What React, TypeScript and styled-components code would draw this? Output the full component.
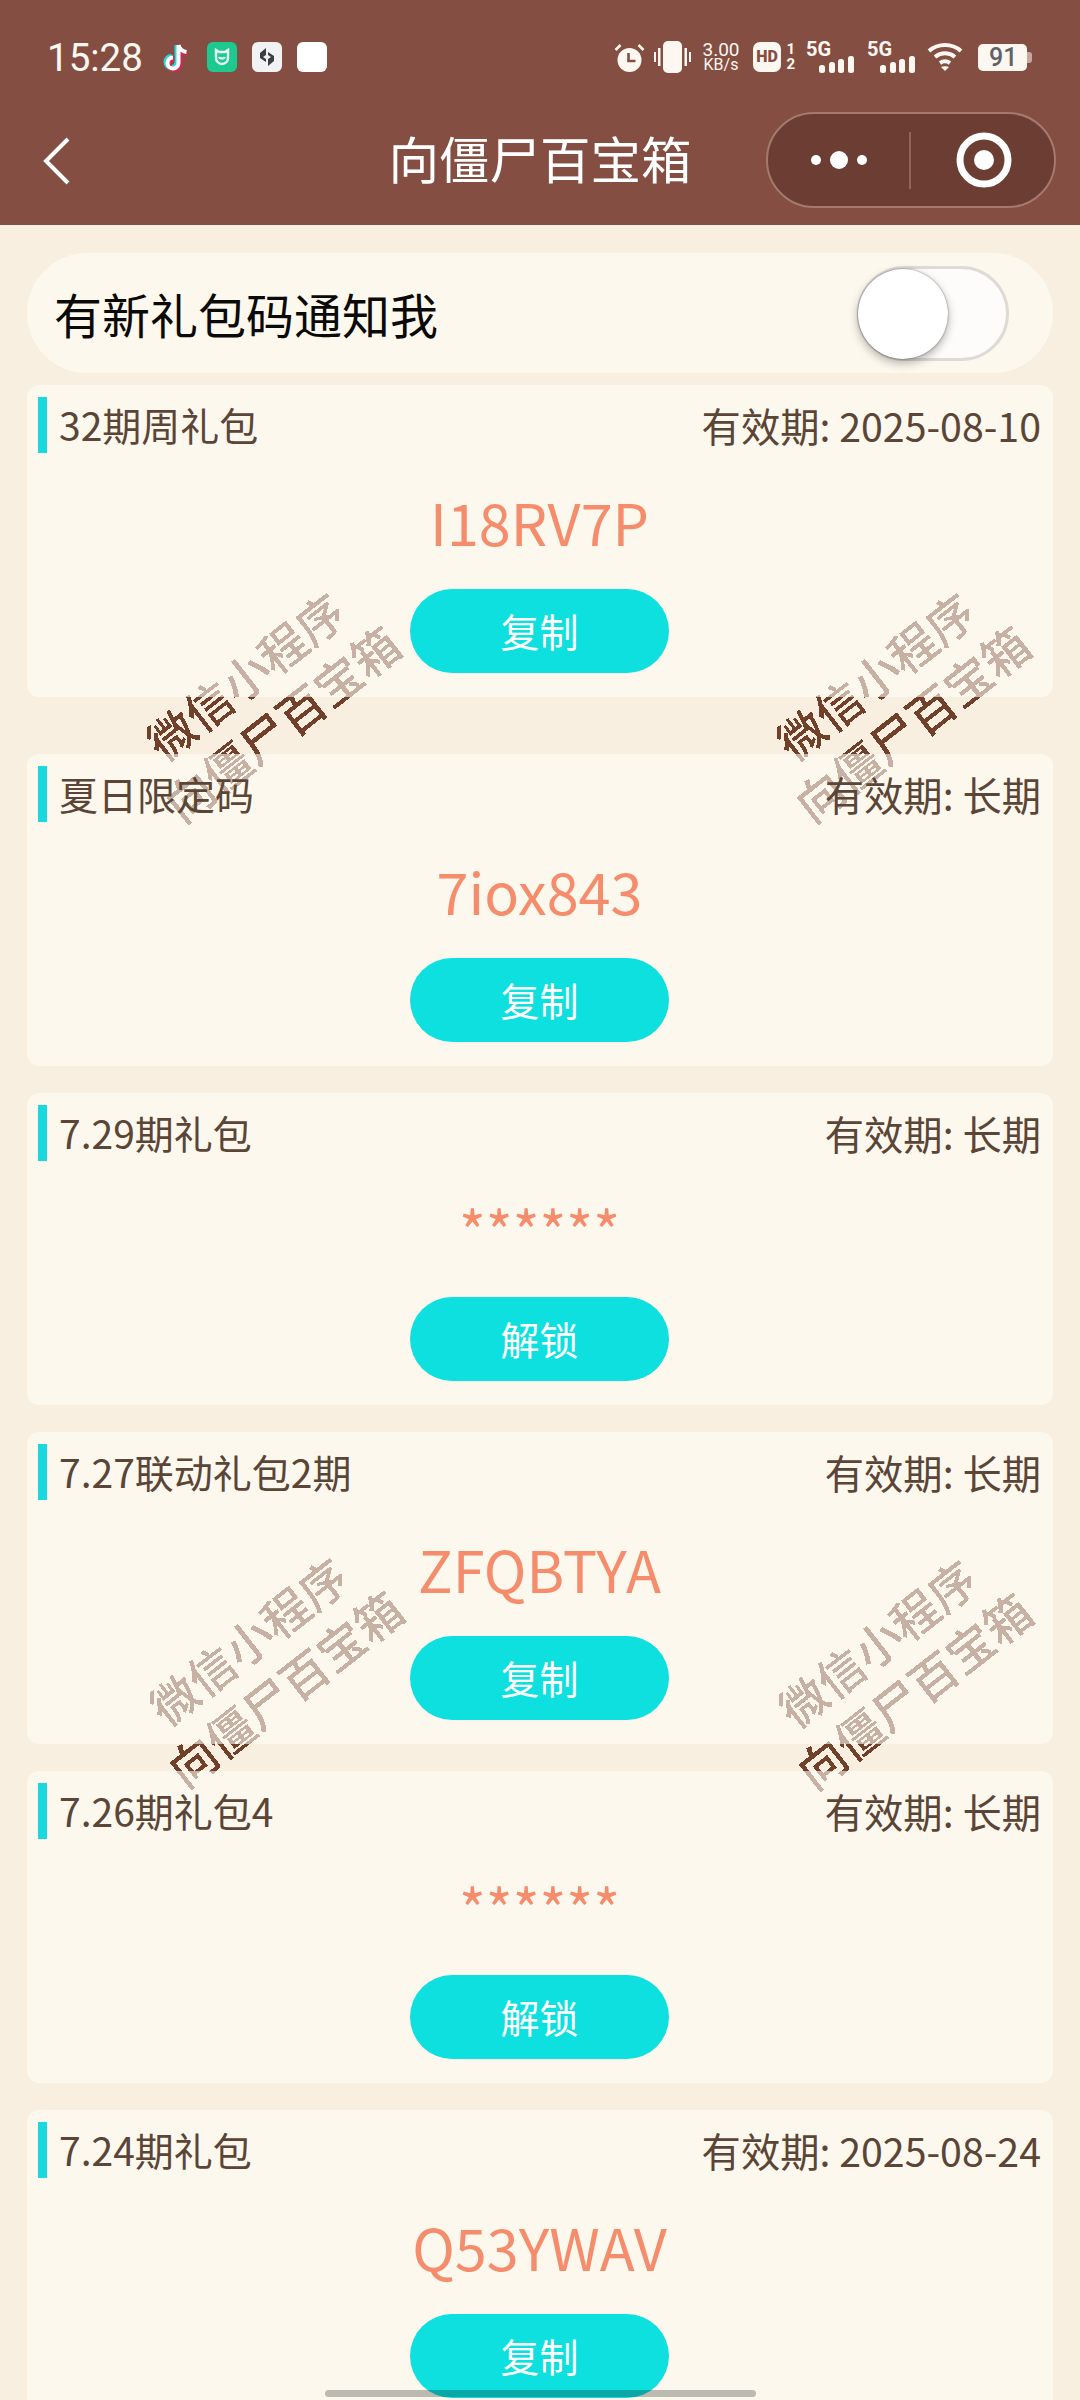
import styled, { createGlobalStyle } from 'styled-components';

const GlobalStyle = createGlobalStyle`
  html, body {
    margin: 0;
    padding: 0;
    background: #f8efe0;
  }
  body {
    font-family: "Noto Sans CJK SC", "Noto Sans", sans-serif;
  }
`;

const Page = styled.div`
  position: relative;
  width: 1080px;
  height: 2400px;
  overflow: hidden;
  background: #f8efe0;
`;

const Header = styled.header`
  position: relative;
  z-index: 1;
  height: 225px;
  background: #844f42;
  color: #fff;
`;

const StatusBar = styled.div`
  height: 113px;
  padding: 1px 48px 0 47px;
  display: flex;
  align-items: center;
  box-sizing: border-box;
`;

const Clock = styled.span`
  font-family: Roboto, sans-serif;
  font-size: 38.5px;
  width: 116px;
  color: #fdf7f2;
`;

const AppIcons = styled.div`
  display: flex;
  align-items: center;
  gap: 15px;
  flex: 1;
`;

const AppTile = styled.div<{ $bg: string }>`
  width: 30px;
  height: 30px;
  border-radius: 6px;
  background: ${(p) => p.$bg};
  display: flex;
  align-items: center;
  justify-content: center;
`;

const SystemIcons = styled.div`
  display: flex;
  align-items: center;
  height: 34px;
  color: #fdf7f2;
  font-family: Roboto, sans-serif;
`;

const Glyph = styled.svg<{ $ml?: number }>`
  display: block;
  flex: none;
  margin-left: ${(p) => p.$ml ?? 0}px;
`;

const Speed = styled.div`
  width: 38px;
  margin: 0 13px 0 11px;
  text-align: center;
  white-space: nowrap;
  span {
    display: block;
    line-height: 15px;
  }
  span:first-child {
    font-size: 19px;
  }
  span:last-child {
    font-size: 16px;
  }
`;

const HdBadge = styled.div`
  flex: none;
  width: 28px;
  height: 30px;
  border-radius: 7px;
  background: #fdf7f2;
  color: #844f42;
  font-size: 16px;
  font-weight: 900;
  line-height: 30px;
  text-align: center;
`;

const SimSlots = styled.div`
  width: 14px;
  font-size: 15px;
  font-weight: 700;
  text-align: right;
  span {
    display: block;
    line-height: 15px;
  }
`;

const SignalBox = styled.div<{ $ml: number }>`
  position: relative;
  flex: none;
  width: 48px;
  height: 34px;
  margin-left: ${(p) => p.$ml}px;
`;

const SignalLabel = styled.span`
  position: absolute;
  left: 0;
  top: 0;
  font-size: 20px;
  font-weight: 700;
  line-height: 18px;
`;

const Battery = styled.div`
  position: relative;
  flex: none;
  width: 49px;
  height: 27px;
  margin: 0 5px 0 15px;
  border-radius: 5px;
  background: #fdf7f2;
  color: #5e6368;
  font-size: 25px;
  font-weight: 500;
  line-height: 27px;
  padding-left: 11px;
  box-sizing: border-box;
  &::after {
    content: '';
    position: absolute;
    right: -5px;
    top: 8px;
    width: 5px;
    height: 11px;
    border-radius: 0 3px 3px 0;
    background: #c9a79e;
  }
`;

const NavBar = styled.nav`
  position: relative;
  height: 112px;
  display: flex;
  align-items: center;
  justify-content: center;
`;

const BackButton = styled.div`
  position: absolute;
  left: 43px;
  top: 24px;
  display: flex;
`;

const NavTitle = styled.h1`
  margin: 0 0 23px;
  font-size: 50.5px;
  font-weight: 400;
  line-height: 1;
  color: #fff;
`;

const Capsule = styled.div`
  position: absolute;
  left: 766px;
  top: -1px;
  width: 290px;
  height: 96px;
  box-sizing: border-box;
  border: 2px solid #a47a6e;
  border-radius: 48px;
  background: #6c3e33;
  display: flex;
  align-items: center;
`;

const CapsuleSide = styled.div<{ $shift: number }>`
  flex: 1;
  display: flex;
  align-items: center;
  justify-content: center;
  padding-left: ${(p) => p.$shift}px;
`;

const CapsuleLine = styled.div`
  width: 2px;
  height: 57px;
  background: #8f6659;
`;

const WatermarkLayer = styled.div`
  position: absolute;
  inset: 0;
  z-index: 0;
  filter: url(#wm-jag);
`;

const Watermark = styled.div<{ $x: number; $y: number }>`
  position: absolute;
  left: ${(p) => p.$x}px;
  top: ${(p) => p.$y}px;
  width: 330px;
  transform: rotate(-38deg);
  transform-origin: center;
  color: #70402c;
  font-size: 47px;
  font-weight: 500;
  line-height: 60px;
  text-align: center;
  white-space: nowrap;
  span {
    display: block;
  }
`;

const FilterDefs = styled.svg`
  position: absolute;
  width: 0;
  height: 0;
`;

const Content = styled.main`
  position: relative;
  z-index: 1;
  padding: 28px 27px 0;
`;

const NotifyRow = styled.section`
  height: 120px;
  border-radius: 60px;
  background: rgba(255, 253, 246, 0.6);
  display: flex;
  align-items: center;
  justify-content: space-between;
  padding: 0 44px 0 27px;
`;

const NotifyLabel = styled.span`
  font-size: 48px;
  color: #0b0a08;
`;

const Toggle = styled.div`
  position: relative;
  width: 152px;
  height: 95px;
  box-sizing: border-box;
  border: 3px solid #dedbd6;
  border-radius: 48px;
  background: #fdfcfa;
`;

const ToggleKnob = styled.div`
  position: absolute;
  left: -2px;
  top: 0;
  width: 90px;
  height: 90px;
  border-radius: 50%;
  background: #fff;
  box-shadow: 0 0 2px rgba(0, 0, 0, 0.5), 0 4px 10px rgba(0, 0, 0, 0.3);
`;

const Card = styled.section<{ $gap: number }>`
  height: 312px;
  margin-top: ${(p) => p.$gap}px;
  border-radius: 12px;
  background: rgba(255, 253, 246, 0.6);
  box-sizing: border-box;
  padding: 12px 12px 0 11px;
  display: flex;
  flex-direction: column;
  align-items: center;
`;

const CardHead = styled.div`
  width: 100%;
  height: 56px;
  display: flex;
  align-items: center;
  justify-content: space-between;
  color: #5b4536;
  font-size: 39px;
`;

const CardTitle = styled.span`
  border-left: 9px solid #19d8de;
  height: 56px;
  line-height: 54px;
  padding-left: 12px;
`;

const Expiry = styled.span`
  font-size: 39.3px;
  line-height: 54px;
`;

const Code = styled.div`
  height: 92px;
  margin-top: 24px;
  color: #f58c6c;
  font-size: 57.5px;
  line-height: 88px;
  text-align: center;
`;

const ActionButton = styled.button`
  width: 259px;
  height: 84px;
  margin-top: 20px;
  padding: 0 0 3px;
  border: none;
  border-radius: 42px;
  background: #0de0df;
  color: #fff;
  font-family: inherit;
  font-size: 39px;
`;

const HomeBar = styled.div`
  position: absolute;
  z-index: 2;
  left: 325px;
  bottom: 3px;
  width: 431px;
  height: 7px;
  border-radius: 4px;
  background: rgba(0, 0, 0, 0.25);
`;

const gifts = [
  { title: '32期周礼包', expiry: '2025-08-10', code: 'I18RV7P', gap: 12 },
  { title: '夏日限定码', expiry: '长期', code: '7iox843', gap: 57 },
  { title: '7.29期礼包', expiry: '长期', code: '******', gap: 27 },
  { title: '7.27联动礼包2期', expiry: '长期', code: 'ZFQBTYA', gap: 27 },
  { title: '7.26期礼包4', expiry: '长期', code: '******', gap: 27 },
  { title: '7.24期礼包', expiry: '2025-08-24', code: 'Q53YWAV', gap: 27 },
];

const marks = [
  { x: 98, y: 639 },
  { x: 728, y: 639 },
  { x: 101, y: 1604 },
  { x: 730, y: 1606 },
];

function Signal({ ml }: { ml: number }) {
  return (
    <SignalBox $ml={ml}>
      <SignalLabel>5G</SignalLabel>
      <svg width="48" height="34" viewBox="0 0 48 34" fill="#fdf7f2">
        <rect x="13" y="25" width="6" height="8" rx="2.500" />
        <rect x="23" y="22" width="6" height="11" rx="2.500" />
        <rect x="32" y="19" width="6" height="14" rx="2.500" />
        <rect x="42" y="16" width="6" height="17" rx="2.500" />
      </svg>
    </SignalBox>
  );
}

function App() {
  return (
    <Page>
      <GlobalStyle />
      <FilterDefs>
        <filter id="wm-jag" x="0" y="0" width="100%" height="100%">
          <feComponentTransfer>
            <feFuncA type="discrete" tableValues="0 1" />
          </feComponentTransfer>
        </filter>
      </FilterDefs>
      <WatermarkLayer>
        {marks.map((m) => (
          <Watermark key={`${m.x}-${m.y}`} $x={m.x} $y={m.y}>
            <span>微信小程序</span>
            <span>向僵尸百宝箱</span>
          </Watermark>
        ))}
      </WatermarkLayer>
      <Header>
        <StatusBar>
          <Clock>15:28</Clock>
          <AppIcons>
            <svg width="29" height="32" viewBox="0 0 29 32">
              <path d="M14 4v17a5.500 5.500 0 1 1-5.500-5.500" fill="none" stroke="#25d8e0" strokeWidth="5" />
              <path d="M17 6v17a5.500 5.500 0 1 1-5.500-5.500M17 6c1 4 4 6 7 6.500" fill="none" stroke="#d8245a" strokeWidth="5" />
              <path d="M15.500 4v18a5.500 5.500 0 1 1-5.500-5.500M15.500 4c1 4 4 6.500 8 7" fill="none" stroke="#fff" strokeWidth="4" />
            </svg>
            <AppTile $bg="#1dc98e">
              <svg width="18" height="18" viewBox="0 0 18 18" fill="none" stroke="#e8fbf4" strokeWidth="2.400">
                <path d="M3 2l3 2h6l3-2v8a6 6 0 0 1-12 0z" />
                <path d="M6 9c1 2 5 2 6 0" />
              </svg>
            </AppTile>
            <AppTile $bg="#f1f2f3">
              <svg width="18" height="20" viewBox="0 0 18 20" fill="#3a3f44">
                <path d="M8 1v7l-3 2 3 2v3L2 11V6zM10 19v-7l3-2-3-2V5l6 4v5z" />
              </svg>
            </AppTile>
            <AppTile $bg="#fff" />
          </AppIcons>
          <SystemIcons>
            <Glyph width="31" height="31" viewBox="0 0 31 31" fill="#fdf7f2">
              <circle cx="15.500" cy="18" r="12" />
              <path d="M14.500 11v8h7" fill="none" stroke="#844f42" strokeWidth="2.600" />
              <path d="M1.500 8l5-5M29.500 8l-5-5" stroke="#fdf7f2" strokeWidth="2.500" />
            </Glyph>
            <Glyph $ml={9} width="37" height="32" viewBox="0 0 37 32" fill="#fdf7f2">
              <rect x="9" y="0" width="19" height="32" rx="5" />
              <rect x="0" y="11" width="2" height="10" />
              <rect x="4" y="7" width="2.500" height="18" />
              <rect x="30.500" y="7" width="2.500" height="18" />
              <rect x="35" y="11" width="2" height="10" />
            </Glyph>
            <Speed>
              <span>3.00</span>
              <span>KB/s</span>
            </Speed>
            <HdBadge>HD</HdBadge>
            <SimSlots>
              <span>1</span>
              <span>2</span>
            </SimSlots>
            <Signal ml={11} />
            <Signal ml={13} />
            <Glyph $ml={12} width="36" height="30" viewBox="0 0 36 30" fill="none" stroke="#fdf7f2" strokeWidth="4">
              <path d="M2 9c9-8 23-8 32 0" />
              <path d="M8 15c6-5 14-5 20 0" />
              <path d="M13 21c3-2 7-2 10 0" />
              <path d="M18 29l-4-4c2-1 6-1 8 0z" fill="#fdf7f2" stroke="none" />
            </Glyph>
            <Battery>91</Battery>
          </SystemIcons>
        </StatusBar>
        <NavBar>
          <BackButton>
            <svg width="28" height="48" viewBox="0 0 28 48" fill="none" stroke="#fff" strokeWidth="4">
              <path d="M25 2L3 24l22 22" />
            </svg>
          </BackButton>
          <NavTitle>向僵尸百宝箱</NavTitle>
          <Capsule>
            <CapsuleSide $shift={0}>
              <svg width="56" height="20" viewBox="0 0 56 20" fill="#fff">
                <circle cx="5" cy="10" r="5" />
                <circle cx="28" cy="10" r="9" />
                <circle cx="51" cy="10" r="5" />
              </svg>
            </CapsuleSide>
            <CapsuleLine />
            <CapsuleSide $shift={2}>
              <svg width="56" height="56" viewBox="0 0 56 56" fill="none">
                <circle cx="28" cy="28" r="24" stroke="#fff" strokeWidth="7" />
                <circle cx="28" cy="28" r="10" fill="#fff" />
              </svg>
            </CapsuleSide>
          </Capsule>
        </NavBar>
      </Header>
      <Content>
        <NotifyRow>
          <NotifyLabel>有新礼包码通知我</NotifyLabel>
          <Toggle>
            <ToggleKnob />
          </Toggle>
        </NotifyRow>
        {gifts.map((g) => {
          const locked = g.code === '******';
          return (
            <Card key={g.title} $gap={g.gap}>
              <CardHead>
                <CardTitle>{g.title}</CardTitle>
                <Expiry>有效期: {g.expiry}</Expiry>
              </CardHead>
              <Code>{g.code}</Code>
              <ActionButton>{locked ? '解锁' : '复制'}</ActionButton>
            </Card>
          );
        })}
      </Content>
      <HomeBar />
    </Page>
  );
}

export default App;
